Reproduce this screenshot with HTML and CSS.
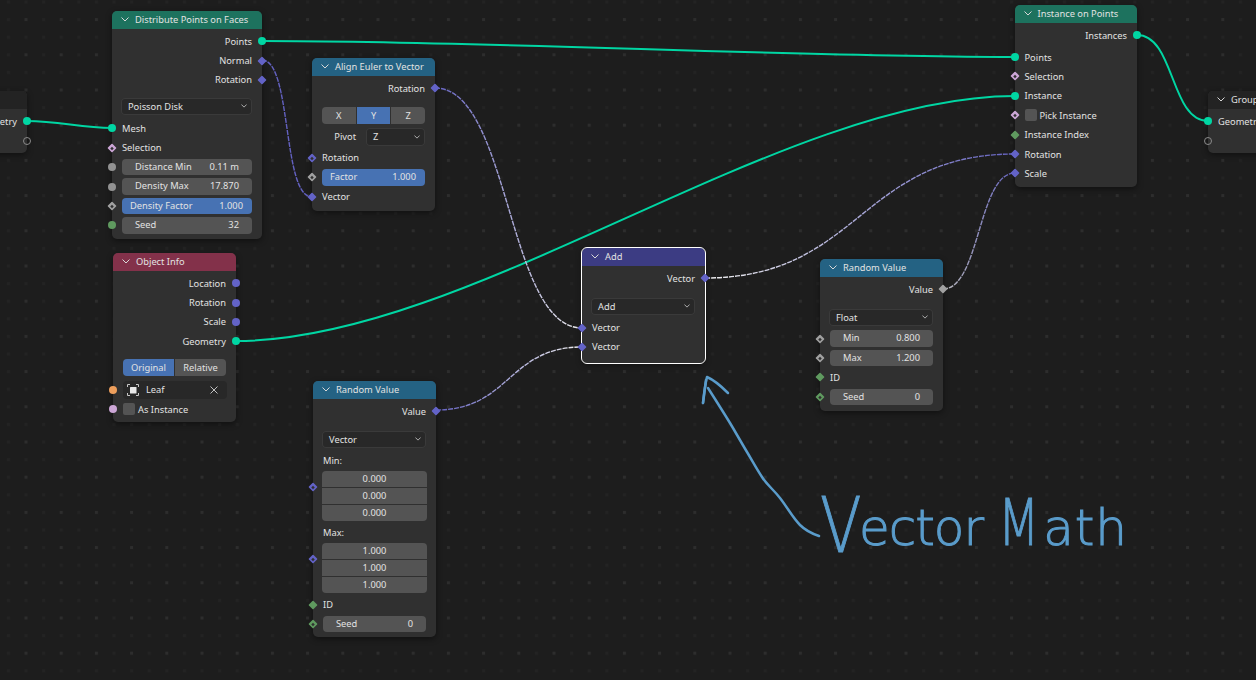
FILE: index.html
```html
<!DOCTYPE html>
<html lang="en">
<head>
    <meta charset="UTF-8">
    <title>Geometry Nodes</title>
    <link rel="stylesheet" href="styles.css">
</head>
<body>
<div class="editor">
    <svg class="links" width="1256" height="680" viewBox="0 0 1256 680" fill="none">
        <defs>
            <pattern id="gridDots" patternUnits="userSpaceOnUse" x="24.5" y="18.1" width="35.2" height="35.2">
                <rect x="0" y="0" width="3" height="3" fill="#2d2d2d"/>
                <rect x="17.6" y="0" width="3" height="3" fill="#232323"/>
                <rect x="0" y="17.6" width="3" height="3" fill="#232323"/>
                <rect x="17.6" y="17.6" width="3" height="3" fill="#232323"/>
            </pattern>
            <linearGradient id="purpleWhiteA" gradientUnits="userSpaceOnUse" x1="435" y1="0" x2="582" y2="0">
                <stop offset="0" stop-color="#6361c0"/><stop offset="1" stop-color="#eeeeee"/>
            </linearGradient>
            <linearGradient id="purpleWhiteB" gradientUnits="userSpaceOnUse" x1="436" y1="0" x2="582" y2="0">
                <stop offset="0" stop-color="#6361c0"/><stop offset="1" stop-color="#eeeeee"/>
            </linearGradient>
            <linearGradient id="whitePurple" gradientUnits="userSpaceOnUse" x1="705" y1="0" x2="1015" y2="0">
                <stop offset="0" stop-color="#eeeeee"/><stop offset="1" stop-color="#6361c0"/>
            </linearGradient>
            <linearGradient id="greyPurple" gradientUnits="userSpaceOnUse" x1="943" y1="0" x2="1015" y2="0">
                <stop offset="0" stop-color="#b8b8b8"/><stop offset="1" stop-color="#6361c0"/>
            </linearGradient>
        </defs>
        <rect width="1256" height="680" fill="url(#gridDots)"/>
        <g class="wire-green">
            <path d="M262 41C500 41 780 57 1015 57"/>
            <path d="M27 121C60 121 80 128 112 128"/>
            <path d="M236 341C470 341 780 96 1015 96"/>
            <path d="M1137 35C1175 35 1170 121 1208 121"/>
        </g>
        <g class="wire-dash">
            <path stroke="#6361c0" d="M262 60C292 60 282 197 312 197"/>
            <path stroke="url(#purpleWhiteA)" d="M435 88C510 88 507 328 582 328"/>
            <path stroke="url(#purpleWhiteB)" d="M436 410C510 410 508 347 582 347"/>
            <path stroke="url(#whitePurple)" d="M705 278C860 278 860 154 1015 154"/>
            <path stroke="url(#greyPurple)" d="M943 289C980 289 978 173 1015 173"/>
        </g>
    </svg>

    <section class="node node-cut-left">
        <header class="node-head"></header>
        <div class="row out">Geometry<i class="sock round green"></i></div>
        <div class="row out"><i class="sock round hollow"></i></div>
    </section>

    <section class="node node-distribute">
        <header class="node-head head-green"><svg class="chev" viewBox="0 0 8 5"><path d="M.5.5 4 4 7.5.5"/></svg>Distribute Points on Faces</header>
        <div class="row out">Points<i class="sock round green"></i></div>
        <div class="row out">Normal<i class="sock dia purple"></i></div>
        <div class="row out">Rotation<i class="sock dia purple"></i></div>
        <div class="gap"></div>
        <div class="select select-loose">Poisson Disk<svg class="chev" viewBox="0 0 8 5"><path d="M.5.5 4 4 7.5.5"/></svg></div>
        <div class="row in"><i class="sock round green"></i>Mesh</div>
        <div class="row in"><i class="sock dia pink dot"></i>Selection</div>
        <div class="row in"><i class="sock round grey"></i><div class="field"><span>Distance Min</span><span>0.11 m</span></div></div>
        <div class="row in"><i class="sock round grey"></i><div class="field"><span>Density Max</span><span>17.870</span></div></div>
        <div class="row in"><i class="sock dia grey dot"></i><div class="field full"><span>Density Factor</span><span>1.000</span></div></div>
        <div class="row in"><i class="sock round idgreen"></i><div class="field"><span>Seed</span><span>32</span></div></div>
    </section>

    <section class="node node-object">
        <header class="node-head head-red"><svg class="chev" viewBox="0 0 8 5"><path d="M.5.5 4 4 7.5.5"/></svg>Object Info</header>
        <div class="row out">Location<i class="sock round purple"></i></div>
        <div class="row out">Rotation<i class="sock round purple"></i></div>
        <div class="row out">Scale<i class="sock round purple"></i></div>
        <div class="row out">Geometry<i class="sock round green"></i></div>
        <div class="gap"></div>
        <div class="toggle"><span class="on">Original</span><span>Relative</span></div>
        <div class="row in pick-row"><i class="sock round orange"></i>
            <div class="picker">
                <svg class="obj-icon" viewBox="0 0 12 12"><path class="corners" d="M.5 3V.5H3M9 .5h2.5V3M11.5 9v2.5H9M3 11.5H.5V9"/><rect x="3" y="3" width="6.5" height="6.5" rx=".5"/></svg>
                <span class="picker-name">Leaf</span>
                <svg class="cross" viewBox="0 0 8 8"><path d="M.5.5l7 7M7.5.5l-7 7"/></svg>
            </div>
        </div>
        <div class="row in"><i class="sock round pink"></i><b class="check"></b>As Instance</div>
    </section>

    <section class="node node-align">
        <header class="node-head head-blue"><svg class="chev" viewBox="0 0 8 5"><path d="M.5.5 4 4 7.5.5"/></svg>Align Euler to Vector</header>
        <div class="row out">Rotation<i class="sock dia purple"></i></div>
        <div class="gap gap-mid"></div>
        <div class="toggle"><span>X</span><span class="on">Y</span><span>Z</span></div>
        <div class="pivot"><span class="pivot-label">Pivot</span><div class="select">Z<svg class="chev" viewBox="0 0 8 5"><path d="M.5.5 4 4 7.5.5"/></svg></div></div>
        <div class="row in"><i class="sock dia purple dot"></i>Rotation</div>
        <div class="row in"><i class="sock dia grey dot"></i><div class="field full"><span>Factor</span><span>1.000</span></div></div>
        <div class="row in"><i class="sock dia purple"></i>Vector</div>
    </section>

    <section class="node node-random-vec">
        <header class="node-head head-blue"><svg class="chev" viewBox="0 0 8 5"><path d="M.5.5 4 4 7.5.5"/></svg>Random Value</header>
        <div class="row out">Value<i class="sock dia purple"></i></div>
        <div class="gap gap-wide"></div>
        <div class="select">Vector<svg class="chev" viewBox="0 0 8 5"><path d="M.5.5 4 4 7.5.5"/></svg></div>
        <div class="vec-label">Min:</div>
        <div class="vec"><i class="sock dia purple dot"></i><span>0.000</span><span>0.000</span><span>0.000</span></div>
        <div class="vec-label">Max:</div>
        <div class="vec"><i class="sock dia purple dot"></i><span>1.000</span><span>1.000</span><span>1.000</span></div>
        <div class="row in"><i class="sock dia idgreen"></i>ID</div>
        <div class="row in"><i class="sock dia idgreen dot"></i><div class="field"><span>Seed</span><span>0</span></div></div>
    </section>

    <section class="node node-add selected">
        <header class="node-head head-indigo"><svg class="chev" viewBox="0 0 8 5"><path d="M.5.5 4 4 7.5.5"/></svg>Add</header>
        <div class="row out">Vector<i class="sock dia purple"></i></div>
        <div class="gap gap-wide"></div>
        <div class="select">Add<svg class="chev" viewBox="0 0 8 5"><path d="M.5.5 4 4 7.5.5"/></svg></div>
        <div class="row in"><i class="sock dia purple"></i>Vector</div>
        <div class="row in"><i class="sock dia purple"></i>Vector</div>
    </section>

    <section class="node node-random-float">
        <header class="node-head head-blue"><svg class="chev" viewBox="0 0 8 5"><path d="M.5.5 4 4 7.5.5"/></svg>Random Value</header>
        <div class="row out">Value<i class="sock dia grey"></i></div>
        <div class="gap gap-wide"></div>
        <div class="select">Float<svg class="chev" viewBox="0 0 8 5"><path d="M.5.5 4 4 7.5.5"/></svg></div>
        <div class="row in"><i class="sock dia grey dot"></i><div class="field"><span>Min</span><span>0.800</span></div></div>
        <div class="row in"><i class="sock dia grey dot"></i><div class="field"><span>Max</span><span>1.200</span></div></div>
        <div class="row in"><i class="sock dia idgreen"></i>ID</div>
        <div class="row in"><i class="sock dia idgreen dot"></i><div class="field"><span>Seed</span><span>0</span></div></div>
    </section>

    <section class="node node-instance">
        <header class="node-head head-green"><svg class="chev" viewBox="0 0 8 5"><path d="M.5.5 4 4 7.5.5"/></svg>Instance on Points</header>
        <div class="row out">Instances<i class="sock round green"></i></div>
        <div class="gap-small"></div>
        <div class="row in"><i class="sock round green"></i>Points</div>
        <div class="row in"><i class="sock dia pink dot"></i>Selection</div>
        <div class="row in"><i class="sock round green"></i>Instance</div>
        <div class="row in"><i class="sock dia pink dot"></i><b class="check"></b>Pick Instance</div>
        <div class="row in"><i class="sock dia idgreen"></i>Instance Index</div>
        <div class="row in"><i class="sock dia purple"></i>Rotation</div>
        <div class="row in"><i class="sock dia purple"></i>Scale</div>
    </section>

    <section class="node node-group">
        <header class="node-head head-dark"><svg class="chev" viewBox="0 0 8 5"><path d="M.5.5 4 4 7.5.5"/></svg>Group Output</header>
        <div class="row in"><i class="sock round green"></i>Geometry</div>
        <div class="row in"><i class="sock round hollow"></i></div>
    </section>

    <svg class="arrow" width="1256" height="680" viewBox="0 0 1256 680" fill="none">
        <path d="M819 536C810 533 805 530 800 525C793 518 787 507 780 498C773 489 767 485 762 477C756 468 753 462 747 452C741 442 736 433 730 423C722 410 715 399 708 388"/>
        <path d="M703 403C704 393 705 385 707 377C714 380 721 386 728 393"/>
        <path d="M706 380C705 388 704 396 703 403"/>
    </svg>
    <div class="note"><span class="note-cap">V</span>ector <span class="note-m">M</span><span class="note-tail">ath</span></div>
</div>
</body>
</html>
```

FILE: styles.css
```css
html, body { margin: 0; padding: 0; }
body { width: 1256px; height: 680px; overflow: hidden; background-color: #1d1d1d; }

.editor {
    position: relative;
    width: 1256px;
    height: 680px;
    overflow: hidden;
    font-family: "Noto Sans", sans-serif;
    font-size: 9.3px;
    color: #e2e2e2;
    background-color: #1d1d1d;
}

.links, .arrow { position: absolute; left: 0; top: 0; }
.wire-green path { stroke: #00d6a3; stroke-width: 2; }
.wire-dash path { stroke-width: 1.4; stroke-dasharray: 5 1; }
.arrow path { stroke: #5a9ccb; stroke-width: 2.5; stroke-linecap: round; stroke-linejoin: round; }

.note {
    position: absolute;
    left: 820px;
    top: 488px;
    font-family: "DejaVu Sans", sans-serif;
    font-weight: 200;
    font-size: 50px;
    line-height: 80px;
    color: #5a9ccb;
    white-space: nowrap;
    letter-spacing: -1px;
    -webkit-text-stroke: 1px #5a9ccb;
}
.note-cap {
    display: inline-block;
    font-size: 76px;
    line-height: 40px;
    vertical-align: -7px;
    transform: scaleX(.8);
    transform-origin: left center;
    margin-right: -12px;
}
.note-m {
    display: inline-block;
    font-size: 64px;
    line-height: 40px;
    transform: scaleX(.75);
    transform-origin: left center;
    margin-right: -9px;
}
.note-tail { letter-spacing: 1px; }

/* nodes */
.node {
    position: absolute;
    box-sizing: border-box;
    background-color: #303030;
    border-radius: 5px;
    box-shadow: 0 2px 6px rgba(0, 0, 0, .45);
    width: 123px;
}
.node-cut-left { left: -60px; top: 91px; width: 87px; height: 62px; }
.node-distribute { left: 112px; top: 11px; width: 150px; height: 228px; }
.node-object { left: 113px; top: 253px; height: 169px; }
.node-align { left: 312px; top: 58px; height: 153px; }
.node-random-vec { left: 313px; top: 381px; height: 256px; }
.node-add { left: 582px; top: 248px; height: 115px; }
.node-random-float { left: 820px; top: 259px; height: 152px; }
.node-instance { left: 1014.5px; top: 5px; width: 122.5px; height: 182px; }
.node-group { left: 1208px; top: 91px; width: 120px; height: 62px; }
.selected { outline: 1px solid #fff; }

.node-head {
    box-sizing: border-box;
    display: flex;
    align-items: center;
    gap: 6px;
    height: 17.5px;
    padding: 0 0 1px 9px;
    margin-bottom: 3px;
    border-radius: 5px 5px 0 0;
    background-color: #232323;
    white-space: nowrap;
    overflow: hidden;
}
.head-green { background-color: #1d725e; }
.head-red { background-color: #83314a; }
.head-blue { background-color: #246283; }
.head-indigo { background-color: #3c3c83; }
.head-dark { background-color: #232323; }

.chev { width: 8px; height: 5px; flex: none; fill: none; stroke: #d8d8d8; stroke-width: 1; }

.row {
    position: relative;
    box-sizing: border-box;
    display: flex;
    align-items: center;
    height: 19.4px;
    padding: 0 10px;
    white-space: nowrap;
}
.row.out { justify-content: flex-end; }
.gap { height: 8px; }
.gap-mid { height: 9px; }
.gap-wide { height: 10px; }
.gap-small { height: 2.5px; }

/* sockets */
.sock { position: absolute; box-sizing: border-box; top: 50%; width: 8px; height: 8px; margin-top: -4px; }
.row.out .sock { right: -4px; }
.row.in .sock { left: -4px; }
.round { border-radius: 50%; }
.dia { transform: rotate(45deg) scale(.82); border-radius: 1px; }
.green { background-color: #00d6a3; }
.purple { background-color: #6363c7; }
.pink { background-color: #cca6d6; }
.grey { background-color: #a1a1a1; }
.idgreen { background-color: #5f9a5f; }
.orange { background-color: #ed9e5c; }
.hollow { border: 1px solid #8a8a8a; background: transparent; }
.dot::after {
    content: "";
    position: absolute;
    left: 2.5px;
    top: 2.5px;
    width: 3px;
    height: 3px;
    background-color: #303030;
}
.round.grey { background-color: #929292; }

/* widgets */
.field {
    flex: 1;
    display: flex;
    justify-content: space-between;
    height: 16.5px;
    line-height: 16.5px;
    padding: 0 13px;
    border-radius: 4px;
    background-color: #545454;
}
.field.full { background-color: #4772b3; padding: 0 9px 0 8px; }

.select {
    display: flex;
    align-items: center;
    justify-content: space-between;
    height: 17px;
    margin: 0 10px 3px 9px;
    padding: 0 5px 0 7px;
    border-radius: 4px;
    background-color: #282828;
    box-shadow: inset 0 0 0 1px #3a3a3a;
}
.select .chev { width: 6px; height: 4px; }
.select-loose { margin-bottom: 4px; }

.toggle {
    display: flex;
    height: 17px;
    line-height: 17px;
    margin: 0 10px 4px;
    gap: 1px;
    text-align: center;
    border-radius: 4px;
    overflow: hidden;
}
.toggle span { flex: 1; background-color: #545454; }
.toggle .on { background-color: #4772b3; }

.pivot { display: flex; align-items: center; margin-bottom: 2.4px; }
.pivot-label { width: 49px; text-align: right; padding-right: 5px; box-sizing: border-box; }
.pivot .select { flex: 1; margin: 0 10px 0 5px; height: 18px; }

.pick-row { padding: 0 9px 0 10px; }
.picker {
    flex: 1;
    display: flex;
    align-items: center;
    height: 18px;
    padding: 0 9px 0 4px;
    border-radius: 4px;
    background-color: #282828;
}
.obj-icon { width: 12px; height: 12px; fill: #e8e8e8; margin-right: 7px; }
.obj-icon .corners { fill: none; stroke: #c8c8c8; stroke-width: 1; }
.picker-name { flex: 1; }
.cross { width: 8px; height: 8px; fill: none; stroke: #c0c0c0; stroke-width: 1; }

.check {
    display: block;
    width: 12px;
    height: 12px;
    margin-right: 3px;
    border-radius: 2px;
    background-color: #545454;
}

.vec-label { height: 19px; line-height: 19px; padding-left: 10px; }
.vec {
    position: relative;
    display: flex;
    flex-direction: column;
    gap: 1px;
    margin: 1px 9px 2px;
}
.vec span { display: block; height: 16px; line-height: 16px; text-align: center; background-color: #545454; }
.vec span:first-of-type { border-radius: 4px 4px 0 0; }
.vec span:last-of-type { border-radius: 0 0 4px 4px; }
.vec .sock { left: -13px; top: 16px; }
```
